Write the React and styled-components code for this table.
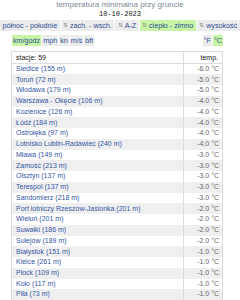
import React from 'react';
import styled, { createGlobalStyle } from 'styled-components';

const Global = createGlobalStyle`
  body {
    margin: 0;
    background: #fff;
    font-family: "Liberation Sans", Arial, sans-serif;
  }
`

const Page = styled.div`
  width: 240px;
  height: 300px;
  overflow: hidden;
`

const Title = styled.div`
  text-align: center;
  font-size: 8px;
  line-height: 10px;
  color: #7b8795;
`

const DateLine = styled.div`
  text-align: center;
  font-family: "Liberation Mono", "Courier New", monospace;
  font-size: 7px;
  line-height: 9px;
  color: #111;
`

const Tabs = styled.div`
  display: flex;
  gap: 1px;
  margin-top: 1px;
  white-space: nowrap;
`

const Tab = styled.div`
  flex: none;
  height: 11px;
  line-height: 11px;
  padding: 0 2.4px;
  font-size: 7.2px;
  color: #2f4f94;
  background: ${p => (p.$active ? '#c6f5a6' : '#ececec')};
  &:last-child {
    flex: 1;
  }
`

const Sort = styled.span`
  font-size: 5.5px;
  color: #888;
  margin-right: 2px;
  vertical-align: 1px;
`

const Units = styled.div`
  display: flex;
  justify-content: space-between;
  margin: 4px 17px 0 12px;
`

const UnitGroup = styled.div`
  display: flex;
  gap: 1px;
`

const Unit = styled.div`
  height: 11px;
  line-height: 11px;
  padding: 0 1px;
  font-size: 7.2px;
  color: #2f4f94;
  background: ${p => (p.$active ? '#c6f5a6' : '#ececec')};
`

const Table = styled.table`
  margin: 5px 17px 0 11px;
  width: 212px;
  border-collapse: collapse;
  border: 1px solid #dcdcdc;
  font-size: 7px;
`

const HeadCell = styled.th`
  height: 11px;
  padding: 0 4px;
  font-weight: normal;
  color: #222;
  text-align: ${p => (p.$right ? 'right' : 'left')};
  border: 1px solid #dcdcdc;
`

const Row = styled.tr`
  height: 10.75px;
  background: ${p => (p.$odd ? '#efefef' : '#fff')};
`

const Station = styled.td`
  padding: 0 4px;
  color: #3556a6;
  line-height: 10px;
  border-right: 1px solid #dcdcdc;
  white-space: nowrap;
`

const Temp = styled.td`
  padding: 0 3px 0 4px;
  color: #666;
  text-align: right;
  line-height: 10px;
  white-space: nowrap;
`

const stations = [
  ['Siedlce (155 m)', '-6.0'],
  ['Toruń (72 m)', '-5.0'],
  ['Włodawa (179 m)', '-5.0'],
  ['Warszawa - Okęcie (106 m)', '-4.0'],
  ['Kozienice (126 m)', '-4.0'],
  ['Łódź (184 m)', '-4.0'],
  ['Ostrołęka (97 m)', '-4.0'],
  ['Lotnisko Lublin-Radawiec (240 m)', '-4.0'],
  ['Mława (149 m)', '-3.0'],
  ['Zamość (213 m)', '-3.0'],
  ['Olsztyn (137 m)', '-3.0'],
  ['Terespol (137 m)', '-3.0'],
  ['Sandomierz (218 m)', '-3.0'],
  ['Port lotniczy Rzeszów-Jasionka (201 m)', '-2.0'],
  ['Wieluń (201 m)', '-2.0'],
  ['Suwałki (186 m)', '-2.0'],
  ['Sulejów (189 m)', '-2.0'],
  ['Białystok (151 m)', '-1.0'],
  ['Kielce (261 m)', '-1.0'],
  ['Płock (109 m)', '-1.0'],
  ['Koło (117 m)', '-1.0'],
  ['Piła (73 m)', '-1.0'],
]

const tabs = [
  { label: 'północ - południe', sort: false },
  { label: 'zach. - wsch.', sort: true },
  { label: 'A-Z', sort: true },
  { label: 'ciepło - zimno', sort: true, active: true },
  { label: 'wysokość', sort: true },
]

const App = () => {
  return (
    <Page>
      <Global />
      <Title>temperatura minimalna przy gruncie</Title>
      <DateLine>10-10-2023</DateLine>
      <Tabs>
        {tabs.map(t => (
          <Tab key={t.label} $active={t.active}>
            {t.sort && <Sort>⇅</Sort>}
            {t.label}
          </Tab>
        ))}
      </Tabs>
      <Units>
        <UnitGroup>
          <Unit $active>km/godz</Unit>
          <Unit>mph</Unit>
          <Unit>kn</Unit>
          <Unit>m/s</Unit>
          <Unit>bft</Unit>
        </UnitGroup>
        <UnitGroup>
          <Unit>°F</Unit>
          <Unit $active>°C</Unit>
        </UnitGroup>
      </Units>
      <Table>
        <thead>
          <tr>
            <HeadCell>stacje: 59</HeadCell>
            <HeadCell $right>temp.</HeadCell>
          </tr>
        </thead>
        <tbody>
          {stations.map(([name, t], i) => (
            <Row key={name} $odd={i % 2 === 1}>
              <Station>{name}</Station>
              <Temp>{t} °C</Temp>
            </Row>
          ))}
        </tbody>
      </Table>
    </Page>
  );
};

export default App;
